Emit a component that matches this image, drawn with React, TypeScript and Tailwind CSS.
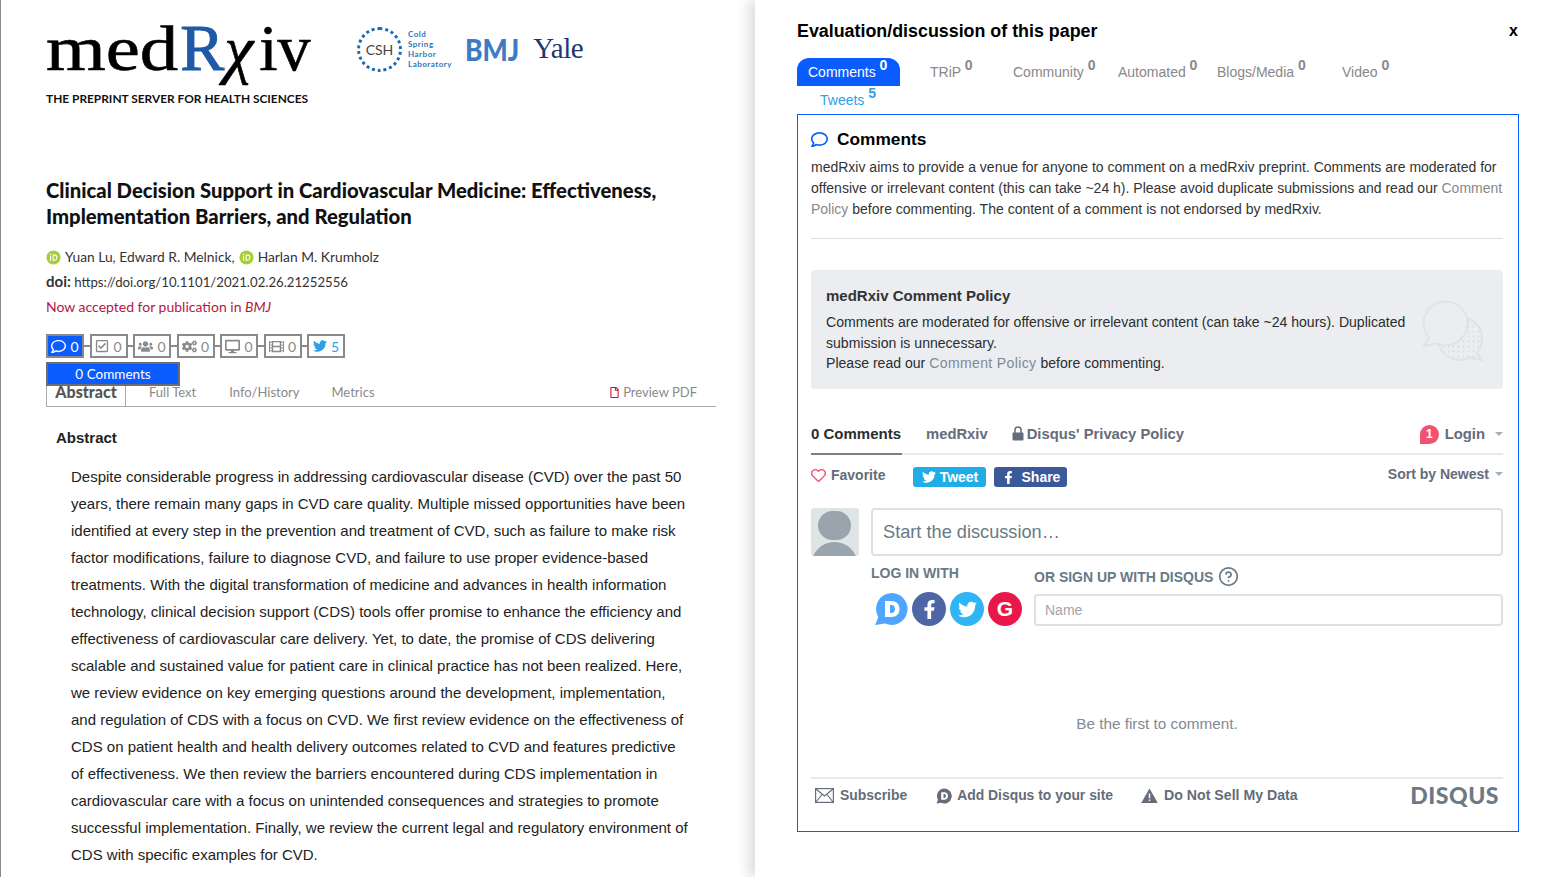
import { HelpCircle } from "lucide-react";
import {
  FaCogs,
  FaDesktop,
  FaFacebookF,
  FaFilm,
  FaRegCheckSquare,
  FaRegComment,
  FaRegFile,
  FaRegHeart,
  FaTwitter,
  FaUsers,
} from "react-icons/fa";

const ABSTRACT = [
  "Despite considerable progress in addressing cardiovascular disease (CVD) over the past 50",
  "years, there remain many gaps in CVD care quality. Multiple missed opportunities have been",
  "identified at every step in the prevention and treatment of CVD, such as failure to make risk",
  "factor modifications, failure to diagnose CVD, and failure to use proper evidence-based",
  "treatments. With the digital transformation of medicine and advances in health information",
  "technology, clinical decision support (CDS) tools offer promise to enhance the efficiency and",
  "effectiveness of cardiovascular care delivery. Yet, to date, the promise of CDS delivering",
  "scalable and sustained value for patient care in clinical practice has not been realized. Here,",
  "we review evidence on key emerging questions around the development, implementation,",
  "and regulation of CDS with a focus on CVD. We first review evidence on the effectiveness of",
  "CDS on patient health and health delivery outcomes related to CVD and features predictive",
  "of effectiveness. We then review the barriers encountered during CDS implementation in",
  "cardiovascular care with a focus on unintended consequences and strategies to promote",
  "successful implementation. Finally, we review the current legal and regulatory environment of",
  "CDS with specific examples for CVD.",
];

const BADGES = [
  { icon: <FaRegComment size={15} />, n: 0, active: true },
  { icon: <FaRegCheckSquare size={14} />, n: 0 },
  { icon: <FaUsers size={15} />, n: 0 },
  { icon: <FaCogs size={15} />, n: 0 },
  { icon: <FaDesktop size={15} />, n: 0 },
  { icon: <FaFilm size={15} />, n: 0 },
  { icon: <FaTwitter size={14} />, n: 5, tweet: true },
];

const TABS = [
  { label: "TRiP", n: 0, w: "w-[83px]" },
  { label: "Community", n: 0, w: "w-[105px]" },
  { label: "Automated", n: 0, w: "w-[99px]" },
  { label: "Blogs/Media", n: 0, w: "w-[125px]" },
  { label: "Video", n: 0, w: "w-[207px]" },
];

function Orcid({ className }: { className?: string }) {
  return (
    <svg viewBox="0 0 16 16" className={className}>
      <circle cx="8" cy="8" r="7.5" fill="#a6ce39" />
      <rect x="4.2" y="6.4" width="1.2" height="5" fill="#fff" />
      <circle cx="4.8" cy="4.7" r="0.8" fill="#fff" />
      <path d="M7 4.9h2.2c2 0 3 1.4 3 3.2s-1.2 3.3-3 3.3H7z M8.2 6v4.3h1c1.3 0 1.900-1 1.900-2.200S10.500 6 9.200 6z" fill="#fff" fillRule="evenodd" />
    </svg>
  );
}

function DisqusD({ className, fill, inner }: { className?: string; fill: string; inner: string }) {
  return (
    <svg viewBox="0 0 34 34" className={className}>
      <path d="M17.500 1a16 16 0 1 1-6.500 30.600L1 33l3.300-7.800A16 16 0 0 1 17.500 1z" fill={fill} />
      <path d="M11 9h6.500c5 0 8 3.200 8 8s-3 8-8 8H11zM16 13v8h1.500c2.300 0 3.500-1.700 3.500-4s-1.200-4-3.500-4z" fill={inner} fillRule="evenodd" />
    </svg>
  );
}

function PolicyBubbles() {
  return (
    <svg viewBox="0 0 62 62" className="w-[62px] h-[62px]" fill="none" stroke="#dfe2e7" strokeWidth="2">
      <defs>
        <pattern id="dots" width="5" height="5" patternUnits="userSpaceOnUse">
          <circle cx="1.500" cy="1.500" r="0.900" fill="#d7dbe1" stroke="none" />
        </pattern>
      </defs>
      <path d="M38 17c12 0 22 9 22 21 0 6-2 11-5 15l5 7-13-2c-3 1-6 2-9 2-12 0-22-9-22-21s10-22 22-22z" fill="url(#dots)" />
      <path d="M23.500 1.500c12 0 22 10 22 22s-10 22-22 22c-4 0-7-1-10-2L2 46l5-8c-3-4-5.500-9-5.500-14.500 0-12 10-22 22-22z" fill="#ebedf1" />
    </svg>
  );
}

function LockIcon() {
  return (
    <svg viewBox="0 0 12 15" className="w-[12px] h-[15px] -translate-y-[1px]">
      <path d="M3 7V4a3 3 0 0 1 6 0v3" fill="none" stroke="#656c7a" strokeWidth="1.500" />
      <rect x="0.500" y="6.500" width="11" height="8" rx="1" fill="#656c7a" />
    </svg>
  );
}

function MailIcon() {
  return (
    <svg viewBox="0 0 19 15" className="w-[19px] h-[15px]" fill="none" stroke="#656c7a" strokeWidth="1.200">
      <rect x="0.600" y="0.600" width="17.800" height="13.800" />
      <path d="M1 1l8.500 7L18 1M1 14l6-7.500M18 14l-6-7.500" />
    </svg>
  );
}

function WarnIcon() {
  return (
    <svg viewBox="0 0 16 14" className="w-[17px] h-[15px]">
      <path d="M8 0.500L15.800 14H0.200z" fill="#656c7a" />
      <path d="M8 5v4.500M8 10.800v1.400" stroke="#fff" strokeWidth="1.400" />
    </svg>
  );
}

export default function App() {
  return (
    <div className="w-[1561px] h-[877px] overflow-hidden flex bg-white font-['Liberation_Sans',sans-serif]">
      {/* Article page */}
      <div className="w-[755px] h-full shrink-0 border-l border-[#8c8c8c] pl-[45px] overflow-hidden">
        <div className="flex items-start h-[107px] pt-[14px]">
          <div className="w-[263px]">
            <div className="h-[68px] flex items-baseline font-['Liberation_Serif',serif] text-[66px] leading-[68px] text-black whitespace-nowrap [-webkit-text-stroke:0.6px_black]">
              <span className="text-[64px] origin-left scale-x-[1.2] mr-[24px]">med</span>
              <span className="text-[#1f5aa8] [-webkit-text-stroke:1px_#1f5aa8]">R</span>
              <span className="italic translate-y-[1px] mr-[6px]">χ</span>
              <span>iv</span>
            </div>
            <div className="mt-[10px] font-['Lato',sans-serif] font-bold text-[11.900px] leading-[14px] text-[#111] whitespace-nowrap">
              THE PREPRINT SERVER FOR HEALTH SCIENCES
            </div>
          </div>
          <div className="ml-[48px] mt-[13px] w-[45px] h-[45px] rounded-full border-[3px] border-dotted border-[#1c69b2] flex items-center justify-center font-['Lato',sans-serif] text-[14px] text-[#444] shrink-0">
            CSH
          </div>
          <div className="ml-[6px] mt-[15px] font-['Lato',sans-serif] font-bold text-[8px] leading-[10px] tracking-[0.5px] text-[#2c75b8] w-[44px]">
            <div>Cold</div>
            <div>Spring</div>
            <div>Harbor</div>
            <div>Laboratory</div>
          </div>
          <div className="ml-[13px] mt-[21px] font-['Lato',sans-serif] font-black text-[26.500px] leading-[28px] text-[#3d7cc4] scale-y-[1.15]">BMJ</div>
          <div className="ml-[14px] mt-[19px] font-['Liberation_Serif',serif] text-[29px] leading-[30px] tracking-[-0.5px] text-[#21366f]">Yale</div>
        </div>

        <h1 className="mt-[70px] font-['Lato',sans-serif] font-black text-[20.250px] leading-[26px] text-[#111] whitespace-nowrap">
          Clinical Decision Support in Cardiovascular Medicine: Effectiveness,
          <br />
          Implementation Barriers, and Regulation
        </h1>

        <div className="mt-[16px] font-['Lato',sans-serif] text-[13.800px] leading-[24px] text-[#333] whitespace-nowrap">
          <div className="flex items-center">
            <Orcid className="w-[15px] h-[15px] mr-[4px]" />
            Yuan Lu, Edward R. Melnick,
            <Orcid className="w-[15px] h-[15px] mx-[4px]" />
            Harlan M. Krumholz
          </div>
          <div className="h-[24px] text-[13.200px]">
            <b className="font-bold text-[15px]">doi:</b> https://doi.org/10.1101/2021.02.26.21252556
          </div>
          <div className="mt-[1px] leading-[25px] text-[14px] text-[#b5163f]">
            Now accepted for publication in <i>BMJ</i>
          </div>
        </div>

        <div className="relative mt-[15px] w-[670px] h-[73px]">
          <div className="flex">
            {BADGES.map((b, i) => (
              <div key={i} className="flex items-center">
                {i > 0 && <div className="w-[5.500px] h-[2px] bg-[#8a8a8a]" />}
                <div
                  className={`w-[38px] h-[24px] border-[2px] border-[#8a8a8a] flex items-center justify-center gap-[4px] font-['Lato',sans-serif] text-[14px] ${
                    b.active ? "bg-[#0a5cff] text-white" : b.tweet ? "bg-white text-[#2f9fe8]" : "bg-white text-[#8a8a8a]"
                  }`}
                >
                  {b.icon}
                  <span>{b.n}</span>
                </div>
              </div>
            ))}
          </div>
          <div className="absolute left-0 top-[28px] z-10 w-[134px] h-[24px] border-[2px] border-[#6d6d6d] bg-[#0a5cff] text-white text-center font-['Lato',sans-serif] text-[13.500px] leading-[21px]">
            0 Comments
          </div>
          <div className="absolute left-0 right-0 top-[46px] h-[27px] border-b border-[#aaa] flex items-end font-['Lato',sans-serif] text-[13px] leading-[22px] text-[#8a8a8a]">
            <div className="w-[80px] h-[27px] border-x border-[#aaa] text-center font-black text-[16px] text-[#555] pt-[2px]">Abstract</div>
            <div className="ml-[23px] pb-[3px]">Full Text</div>
            <div className="ml-[33px] pb-[3px]">Info/History</div>
            <div className="ml-[32px] pb-[3px]">Metrics</div>
            <div className="ml-auto mr-[19px] pb-[3px] flex items-center gap-[3px]">
              <FaRegFile size={11} className="text-[#c8102e]" />
              Preview PDF
            </div>
          </div>
        </div>

        <h2 className="mt-[20px] ml-[10px] text-[15px] leading-[22px] font-bold text-[#222]">Abstract</h2>
        <div className="mt-[14px] ml-[25px] text-[15px] leading-[27px] text-[#222] whitespace-nowrap">
          {ABSTRACT.map((line) => (
            <div key={line}>{line}</div>
          ))}
        </div>
      </div>

      {/* Discussion drawer */}
      <div className="relative w-[806px] h-full pl-[42px] pr-[42px] shadow-[-6px_0_12px_rgba(0,0,0,0.14)]">
        <div className="flex items-center justify-between pt-[20px] h-[58px] pb-[16px]">
          <h2 className="text-[17.850px] leading-[22px] font-bold text-black whitespace-nowrap">Evaluation/discussion of this paper</h2>
          <span className="text-[16px] font-bold text-black leading-[22px] mr-[1px]">x</span>
        </div>

        <div className="flex flex-wrap w-[722px] h-[56px] text-[14px] leading-[28px] text-[#888]">
          <div className="w-[103px] h-[28px] pl-[11px] bg-[#0a5cff] text-white rounded-t-[12px] whitespace-nowrap">
            Comments <span className="font-bold text-[14px] leading-none relative -top-[7px]">0</span>
          </div>
          {TABS.map((t) => (
            <div key={t.label} className={`${t.w} h-[28px] pl-[30px] whitespace-nowrap`}>
              {t.label} <span className="font-bold text-[14px] leading-none relative -top-[7px]">{t.n}</span>
            </div>
          ))}
          <div className="w-[120px] h-[28px] pl-[23px] text-[#2f9fe8] whitespace-nowrap">
            Tweets <span className="font-bold text-[14px] leading-none relative -top-[7px]">5</span>
          </div>
        </div>

        <div className="w-[722px] h-[718px] border border-[#0a5cff] pl-[13px] pr-[15px]">
          <div className="flex items-center gap-[9px] h-[22px] mt-[13px]">
            <FaRegComment size={17} className="text-[#0a5cff]" />
            <h3 className="text-[17.300px] leading-[22px] font-bold text-black">Comments</h3>
          </div>
          <div className="mt-[7px] pb-[18px] border-b border-[#ddd] text-[14px] leading-[21px] text-[#333] whitespace-nowrap">
            <div>medRxiv aims to provide a venue for anyone to comment on a medRxiv preprint. Comments are moderated for</div>
            <div>
              offensive or irrelevant content (this can take ~24 h). Please avoid duplicate submissions and read our <span className="text-[#888]">Comment</span>
            </div>
            <div>
              <span className="text-[#888]">Policy</span> before commenting. The content of a comment is not endorsed by medRxiv.
            </div>
          </div>

          <div className="relative mt-[31px] h-[119px] rounded-[4px] bg-[#ebedf1] pl-[15px] pt-[15px] whitespace-nowrap">
            <div className="text-[15px] leading-[22px] font-bold text-[#333]">medRxiv Comment Policy</div>
            <div className="mt-[5px] text-[14.070px] leading-[20.500px] text-[#2a2e2e]">
              <div>Comments are moderated for offensive or irrelevant content (can take ~24 hours). Duplicated</div>
              <div>submission is unnecessary.</div>
              <div>
                Please read our <span className="text-[#7f8a94] tracking-[0.35px]">Comment Policy</span> before commenting.
              </div>
            </div>
            <div className="absolute right-[19px] top-[30px]">
              <PolicyBubbles />
            </div>
          </div>

          <div className="mt-[30px] h-[36px] flex items-start border-b-[2px] border-[#e7e9ee] text-[14.800px] leading-[30px] font-bold text-[#656c7a] whitespace-nowrap">
            <div className="h-[36px] border-b-[2px] border-[#7f7f7f] text-[15px] text-[#2a2e2e] w-[91px]">0 Comments</div>
            <div className="ml-[24px]">medRxiv</div>
            <div className="ml-[24px] flex items-center h-[30px] gap-[3px]">
              <LockIcon />
              Disqus' Privacy Policy
            </div>
            <div className="ml-auto flex items-center h-[30px]">
              <div className="relative w-[19px] h-[19px] rounded-full rounded-bl-[3px] bg-[#f05370] text-white text-[12px] leading-[19px] text-center mr-[6px]">1</div>
              Login
              <div className="ml-[10px] w-0 h-0 border-x-[4px] border-x-transparent border-t-[4px] border-t-[#aab0b8]" />
            </div>
          </div>

          <div className="mt-[11px] h-[22px] flex items-center text-[14px] font-bold text-[#656c7a] whitespace-nowrap">
            <FaRegHeart size={15} className="text-[#f05370] mr-[5px] -translate-y-[2px]" />
            <span className="-translate-y-[2px]">Favorite</span>
            <div className="ml-[28px] w-[73px] h-[20px] rounded-[3px] bg-[#1fade8] text-white flex items-center justify-center gap-[4px]">
              <FaTwitter size={14} />
              Tweet
            </div>
            <div className="ml-[8px] w-[73px] h-[20px] rounded-[3px] bg-[#3b5998] text-white flex items-center justify-center gap-[7px]">
              <FaFacebookF size={13} />
              Share
            </div>
            <div className="ml-auto flex items-center -translate-y-[3px]">
              Sort by Newest
              <div className="ml-[6px] w-0 h-0 border-x-[4px] border-x-transparent border-t-[4px] border-t-[#aab0b8]" />
            </div>
          </div>

          <div className="mt-[20px] flex gap-[12px]">
            <div className="relative w-[48px] h-[48px] rounded-[3px] bg-[#dfe4e7] overflow-hidden shrink-0">
              <div className="absolute left-[7px] top-[3px] w-[33px] h-[29px] rounded-full bg-[#99a4ad]" />
              <div className="absolute left-0 top-[34px] w-[47px] h-[30px] rounded-t-full bg-[#99a4ad]" />
            </div>
            <div className="flex-1 h-[48px] rounded-[4px] border-[2px] border-[#dde1e5] pl-[10px] text-[18.200px] leading-[44px] text-[#687a86]">
              Start the discussion…
            </div>
          </div>

          <div className="ml-[60px] mt-[8px] flex text-[14px] font-bold text-[#687a86] whitespace-nowrap">
            <div className="w-[163px]">
              <div className="leading-[18px]">LOG IN WITH</div>
              <div className="mt-[10px] ml-[3px] flex gap-[4px]">
                <DisqusD className="w-[34px] h-[34px]" fill="#4ea6ff" inner="#fff" />
                <div className="w-[34px] h-[34px] rounded-full bg-[#4f66a6] text-white flex items-center justify-center">
                  <FaFacebookF size={19} />
                </div>
                <div className="w-[34px] h-[34px] rounded-full bg-[#2fb5f4] text-white flex items-center justify-center">
                  <FaTwitter size={19} />
                </div>
                <div className="w-[34px] h-[34px] rounded-full bg-[#e8194a] text-white flex items-center justify-center text-[21px] font-black">G</div>
              </div>
            </div>
            <div className="flex-1 pt-[3px]">
              <div className="flex items-center gap-[5px] h-[20px] leading-[20px]">
                OR SIGN UP WITH DISQUS
                <HelpCircle size={21} strokeWidth={2} className="-translate-y-[1px]" />
              </div>
              <div className="mt-[7px] h-[32px] rounded-[4px] border-[2px] border-[#dde1e5] pl-[9px] text-[14px] leading-[28px] font-normal text-[#a5a5a5]">Name</div>
            </div>
          </div>

          <div className="mt-[88px] text-center text-[15.300px] leading-[20px] text-[#7f8a94]">Be the first to comment.</div>

          <div className="mt-[43px] pt-[5px] border-t-[2px] border-[#e7e9ee] h-[30px] flex items-center text-[13.900px] font-bold text-[#656c7a] whitespace-nowrap">
            <span className="ml-[4px] mr-[6px]">
              <MailIcon />
            </span>
            Subscribe
            <DisqusD className="ml-[29px] mr-[5px] w-[16px] h-[16px]" fill="#656c7a" inner="#fff" />
            Add Disqus to your site
            <span className="ml-[28px] mr-[6px]">
              <WarnIcon />
            </span>
            <span className="text-[14.150px]">Do Not Sell My Data</span>
            <div className="ml-auto mr-[4px] font-['Lato',sans-serif] text-[23px] font-black tracking-[0.5px] text-[#6b7a85]">DISQUS</div>
          </div>
        </div>
      </div>
    </div>
  );
}
